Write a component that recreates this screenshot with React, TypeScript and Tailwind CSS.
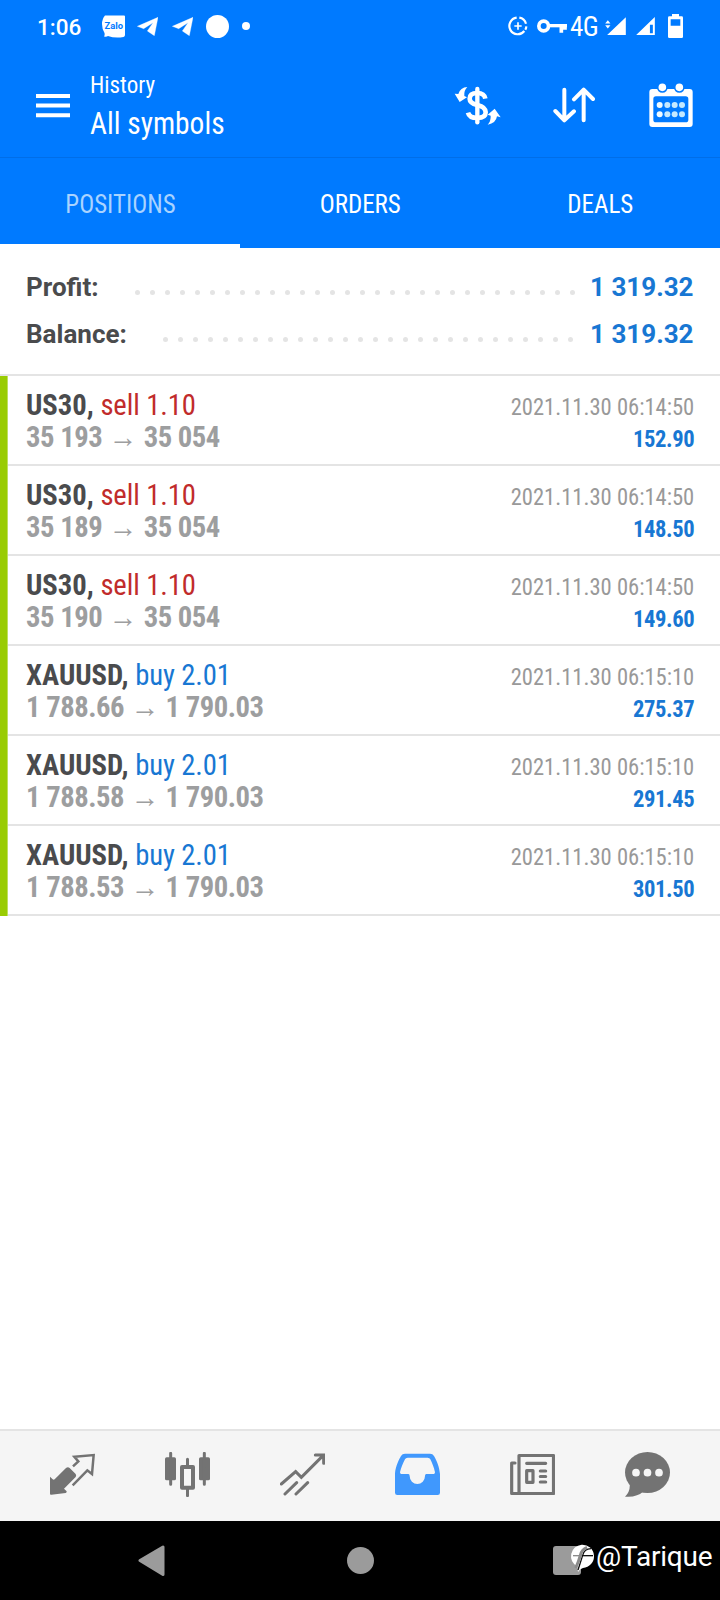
import { ReactNode } from "react";

interface Position {
  symbol: string;
  side: "buy" | "sell";
  volume: string;
  open: string;
  close: string;
  time: string;
  profit: string;
}

const positions: Position[] = [
  { symbol: "US30", side: "sell", volume: "1.10", open: "35 193", close: "35 054", time: "2021.11.30 06:14:50", profit: "152.90" },
  { symbol: "US30", side: "sell", volume: "1.10", open: "35 189", close: "35 054", time: "2021.11.30 06:14:50", profit: "148.50" },
  { symbol: "US30", side: "sell", volume: "1.10", open: "35 190", close: "35 054", time: "2021.11.30 06:14:50", profit: "149.60" },
  { symbol: "XAUUSD", side: "buy", volume: "2.01", open: "1 788.66", close: "1 790.03", time: "2021.11.30 06:15:10", profit: "275.37" },
  { symbol: "XAUUSD", side: "buy", volume: "2.01", open: "1 788.58", close: "1 790.03", time: "2021.11.30 06:15:10", profit: "291.45" },
  { symbol: "XAUUSD", side: "buy", volume: "2.01", open: "1 788.53", close: "1 790.03", time: "2021.11.30 06:15:10", profit: "301.50" },
];

const tabs = ["POSITIONS", "ORDERS", "DEALS"];

const TelegramIcon = () => (
  <svg className="h-[19px] w-[21px]" viewBox="0 0 63 57" fill="white">
    <path d="M1 28 L63 1 L52 56 L31 42 L48 17 L20 35 Z" stroke="white" strokeWidth="1" strokeLinejoin="round" />
  </svg>
);

const StatusBar = () => (
  <div className="flex h-[52px] items-center pr-[37px] pl-[37px] text-white">
    <span className="w-[65px] pt-0.5 text-[22.5px] font-medium leading-[52px]">1:06</span>
    <svg className="h-[23px] w-[23px]" viewBox="0 0 23 23">
      <path d="M3 0.5 H22 Q23 0.5 23 1.5 V20 Q23 21.5 21.500 22 Q13 23.500 6 21 Q4.500 22 2 21.500 Q3 20 2.500 18 Q0 14 0 9 Q0 4 3 0.5 Z" fill="white" />
      <text x="11.800" y="13.800" textAnchor="middle" fontSize="9" fontWeight="700" fill="#007aff" textLength="18.500" lengthAdjust="spacingAndGlyphs">
        Zalo
      </text>
    </svg>
    <div className="ml-3 flex items-center gap-3.5">
      <TelegramIcon />
      <TelegramIcon />
      <div className="-ml-[1px] h-[23px] w-[23px] rounded-full bg-white" />
      <div className="-ml-[1px] h-2 w-2 rounded-full bg-white" />
    </div>

    <svg className="ml-auto h-5 w-5" viewBox="0 0 60 60" fill="none" stroke="white">
      <path d="M26 5 A25 25 0 1 0 49 45" strokeWidth="6.500" />
      <path d="M34 5 A25 25 0 0 1 54 23 M55 31 A25 25 0 0 1 52 41" strokeWidth="6.500" />
      <path d="M30 19 V41 M19 30 H41" strokeWidth="5" />
    </svg>
    <svg className="ml-[9px] h-[14px] w-[30px]" viewBox="0 0 90 42" fill="none" stroke="white">
      <circle cx="20" cy="21" r="14.500" strokeWidth="11" />
      <path d="M34 20 H90" strokeWidth="10" />
      <path d="M73 20 V41 M84 20 V32" strokeWidth="11" />
    </svg>
    <span className="ml-[3px] w-[35px] pt-0.5 text-[27px] font-stretch-condensed leading-[52px] tracking-[-0.6px]">4G</span>
    <svg className="h-[18px] w-[21px]" viewBox="0 0 63 55" fill="white">
      <path d="M6 55 L63 1 V55 Z M0 20 L8 10 L16 20 Z M0 25 L8 35 L16 25 Z" />
    </svg>
    <svg className="ml-[10px] h-[18px] w-[19px]" viewBox="0 0 57 55" fill="white">
      <path fillRule="evenodd" d="M0 55 L57 0 V55 Z M42 24 V50 H51 V24 Z" />
    </svg>
    <svg className="ml-[13px] h-6 w-[15px]" viewBox="0 0 45 72" fill="white">
      <path fillRule="evenodd" d="M12 0 H33 V7 H41 Q45 7 45 11 V68 Q45 72 41 72 H4 Q0 72 0 68 V11 Q0 7 4 7 H12 Z M8 16 V35 H37 V16 Z" />
    </svg>
  </div>
);

const Header = () => (
  <header className="flex h-[105px] items-start pt-3.5 pr-[27px] pl-9 text-white">
    <svg className="mt-7 h-6 w-[34px]" viewBox="0 0 34 24" fill="none" stroke="white" strokeWidth="4">
      <path d="M0 2 H34 M0 11.600 H34 M0 21.200 H34" />
    </svg>
    <div className="ml-5 w-40 font-stretch-condensed">
      <div className="origin-left scale-x-[0.96] text-[24px] leading-[38px]">History</div>
      <div className="origin-left scale-x-[0.92] text-[32px] leading-[38px]">All symbols</div>
    </div>
    <svg className="mt-5 ml-auto h-10 w-[47px]" viewBox="0 0 141 120" fill="none">
      <path
        d="M94 38 Q91 21 70 21 Q47 21 47 38 Q47 51 70 57 Q95 63 95 79 Q95 96 70 96 Q46 96 42 80"
        stroke="white"
        strokeWidth="14"
      />
      <path d="M70 9 V109" stroke="white" strokeWidth="13" strokeLinecap="round" />
      <path d="M40 3 Q19 4 13 24 L2 23 L17 48 L39 34 L31 30 Q29 14 40 3 Z" fill="white" />
      <path d="M122 68 L101 86 L110 89 Q111 105 101 116 Q126 112 129 91 L140 94 Z" fill="white" />
    </svg>
    <svg
      className="mt-[21px] ml-[52px] h-9 w-[42px]"
      viewBox="0 0 126 108"
      fill="none"
      stroke="white"
      strokeWidth="12"
      strokeLinecap="round"
      strokeLinejoin="round"
    >
      <path d="M34 8 V99 M7 72 L34 100 L63 73 M92 100 V10 M63 37 L92 8 L120 36" />
    </svg>
    <svg className="mt-[17px] ml-[54px] h-11 w-11" viewBox="0 0 132 132">
      <path
        fillRule="evenodd"
        fill="white"
        d="M10 18 H122 Q131 18 131 27 V123 Q131 132 122 132 H10 Q1 132 1 123 V27 Q1 18 10 18 Z M21 40 Q13 40 13 48 V110 Q13 118 21 118 H110 Q118 118 118 110 V48 Q118 40 110 40 Z"
      />
      <g fill="white" stroke="#007aff" strokeWidth="5">
        <circle cx="40" cy="13" r="14" />
        <circle cx="91" cy="13" r="14" />
      </g>
      {[32, 55, 77, 99].map((x, i) => (
        <g key={x} fill={i === 0 ? "#f0fbff" : "#c4e9ff"}>
          <circle cx={x} cy="66" r="9" />
          <circle cx={x} cy="94" r="9" />
        </g>
      ))}
    </svg>
  </header>
);

const Tabs = () => (
  <div className="grid h-[91px] grid-cols-3 border-t border-[#006ee8]">
    {tabs.map((tab, i) => (
      <div
        key={tab}
        className={`border-b-4 pt-1.5 pl-px text-center text-[26px] font-stretch-condensed leading-[80px] ${
          i === 0 ? "border-white text-[#a9d3ff]" : "border-transparent text-white"
        }`}
      >
        <span className="inline-block scale-x-[0.96]">{tab}</span>
      </div>
    ))}
  </div>
);

interface SummaryRowProps {
  label: string;
  value: string;
  dots: number;
  labelWidth: string;
  dotsMargin: string;
}

const SummaryRow = ({ label, value, dots, labelWidth, dotsMargin }: SummaryRowProps) => (
  <div className="flex h-[47px] items-center text-[26px] font-bold leading-[47px]">
    <span className={`shrink-0 text-[#4a4b4d] ${labelWidth}`}>{label}</span>
    <div className={`mt-2.5 flex flex-1 justify-between ${dotsMargin}`}>
      {Array.from({ length: dots }, (_, i) => (
        <span key={i} className="h-[5px] w-[5px] rounded-full bg-[#e4e4e4]" />
      ))}
    </div>
    <span className="w-[103px] shrink-0 whitespace-nowrap text-right text-[#1877d3]">{value}</span>
  </div>
);

const PositionRow = ({ position }: { position: Position }) => (
  <div className="flex h-[90px] justify-between border-b-2 border-[#e4e4e4] pr-[26px] pl-[18px] font-stretch-condensed leading-8">
    <div className="origin-left scale-x-[0.955] pt-[13px] text-[30px]">
      <div>
        <span className="font-bold text-[#4a4b4d]">{position.symbol}, </span>
        <span className={`tracking-[-0.1px] ${position.side === "sell" ? "text-[#c12b2b]" : "text-[#1877d3]"}`}>
          {position.side} {position.volume}
        </span>
      </div>
      <div className="font-bold tracking-[-0.5px] text-[#9d9e9f]">
        {position.open}
        <span className="mx-[7px] font-normal">→</span>
        {position.close}
      </div>
    </div>
    <div className="origin-right scale-x-[0.94] pt-[15px] text-right text-[24px]">
      <div className="text-[#999999]">{position.time}</div>
      <div className="font-bold tracking-[-0.4px] text-[#1877d3]">{position.profit}</div>
    </div>
  </div>
);

const NavIcon = ({ children, color = "#737373" }: { children: ReactNode; color?: string }) => (
  <svg className="h-[45px] w-[45px]" viewBox="0 0 135 135" fill="none" color={color}>
    {children}
  </svg>
);

const BottomNav = () => (
  <nav className="grid h-[92px] grid-cols-6 justify-items-center border-t-2 border-[#e4e4e4] bg-[#f5f5f5] px-[15px] pt-[21px]">
    {/* Quotes */}
    <NavIcon>
      <path d="M0 74 L8 82 Q11 84 14 82 L48 48 Q54 43 59 48 L77 66 Q80 70 77 75 L42 110 L50 118 Q51 122 47 123 L4 128 Q0 129 0 125 Z" fill="currentColor" />
      <path d="M69 43 L85 28 L73 14 L131 9 L126 66 L112 55 L68 100" stroke="currentColor" strokeWidth="7.500" />
    </NavIcon>
    {/* Charts */}
    <NavIcon>
      <g fill="currentColor">
        <rect x="0" y="16" width="33" height="69" rx="5" />
        <rect x="102" y="16" width="33" height="69" rx="5" />
      </g>
      <rect x="51" y="45" width="33" height="62" stroke="currentColor" strokeWidth="12" strokeLinejoin="round" />
      <path d="M17 4 V97 M118 4 V97 M67.500 22 V42 M67.500 110 V131" stroke="currentColor" strokeWidth="9" strokeLinecap="round" />
    </NavIcon>
    {/* Trade */}
    <NavIcon>
      <path
        d="M4 96 L47 59 L64 76 L129 11 M106 9 H131 V34 M15 126 L50 92 M48 126 L83 92"
        stroke="currentColor"
        strokeWidth="9"
        strokeLinecap="round"
      />
    </NavIcon>
    {/* History */}
    <NavIcon color="#4098fd">
      <path
        fillRule="evenodd"
        fill="currentColor"
        d="M0 64 C2 42 12 22 18 12 Q22 5 30 5 H105 Q113 5 117 12 C125 25 133 45 135 66 V122 Q135 129 128 129 H7 Q0 129 0 122 Z M15 61 Q15 66 19 66 H40 Q44 66 44 72 A23 24 0 0 0 90 72 Q90 66 94 66 H116 Q120 66 120 61 C117 45 111 33 106 22 Q104 17 98 17 H38 Q32 17 30 22 C24 34 18 46 15 61 Z"
      />
    </NavIcon>
    {/* News */}
    <NavIcon>
      <g stroke="currentColor" strokeWidth="9.500" strokeLinejoin="round" strokeLinecap="round">
        <rect x="27" y="10.500" width="103.500" height="114" />
        <path d="M15 33 H5 V124.500 H27 M50 34 H107 M91 57 H107 M91 73.500 H107 M91 90 H107" />
        <rect x="50" y="56" width="19" height="35" />
      </g>
    </NavIcon>
    {/* Messages */}
    <NavIcon>
      <path d="M14 92 Q17 118 0 134 Q36 137 56 118 Z" fill="currentColor" />
      <ellipse cx="67.500" cy="61.500" rx="67.500" ry="61.500" fill="currentColor" />
      <g fill="#f5f5f5">
        <circle cx="33" cy="62" r="11.500" />
        <circle cx="67.500" cy="62" r="11.500" />
        <circle cx="102" cy="62" r="11.500" />
      </g>
    </NavIcon>
  </nav>
);

const SystemNav = () => (
  <div className="relative flex h-[79px] items-start bg-black pt-6 pl-[138px]">
    <svg className="h-8 w-[27px]" viewBox="0 0 27 32" fill="#9b9b9b" stroke="#9b9b9b" strokeWidth="3" strokeLinejoin="round">
      <path d="M2 15.500 L25 2 V29.500 Z" />
    </svg>
    <div className="mt-[2px] ml-[182px] h-[27px] w-[27px] rounded-full bg-[#9b9b9b]" />
    <div className="mt-[1px] ml-[179px] h-[29px] w-[28px] rounded-[3px] bg-[#9b9b9b]" />

    {/* Watermark sits over the recents button */}
    <div className="absolute top-5 left-[569px] flex items-start text-white">
      <svg className="mt-[3px] h-[29px] w-[26px]" viewBox="0 0 78 87">
        <path d="M38 2 A35 35 0 0 1 42 72 Q34 74 27 84 L25 68 A35 35 0 0 1 38 2 Z" fill="white" />
        <path d="M40 35 H72" stroke="#111" strokeWidth="4" />
        <path d="M12 35 H40" stroke="#8b8b8b" strokeWidth="4" />
        <path d="M27 78 Q36 50 41 34 Q46 14 66 14" fill="none" stroke="#111" strokeWidth="4" />
        <path d="M20 72 Q30 50 34 34 Q38 16 54 10" fill="none" stroke="#8b8b8b" strokeWidth="9" />
      </svg>
      <span className="ml-px text-[28px] leading-[31px] tracking-[-0.2px]">@Tarique</span>
    </div>
  </div>
);

export default function App() {
  return (
    <div className="flex h-[1600px] w-[720px] flex-col overflow-hidden bg-white font-['Roboto',sans-serif]">
      <div className="bg-[#007aff]">
        <StatusBar />
        <Header />
        <Tabs />
      </div>

      <div className="h-32 border-b-2 border-[#e4e4e4] py-4 pr-[27px] pl-[26px]">
        <SummaryRow label="Profit:" value="1 319.32" dots={30} labelWidth="w-[109px]" dotsMargin="mr-[15px]" />
        <SummaryRow label="Balance:" value="1 319.32" dots={28} labelWidth="w-[137px]" dotsMargin="mr-[17px]" />
      </div>

      <div className="flex">
        <div className="w-2 border-r border-[#bfe05f] bg-[#99cc03]" />
        <div className="flex-1">
          {positions.map((position, i) => (
            <PositionRow key={i} position={position} />
          ))}
        </div>
      </div>

      <div className="flex-1" />
      <BottomNav />
      <SystemNav />
    </div>
  );
}
